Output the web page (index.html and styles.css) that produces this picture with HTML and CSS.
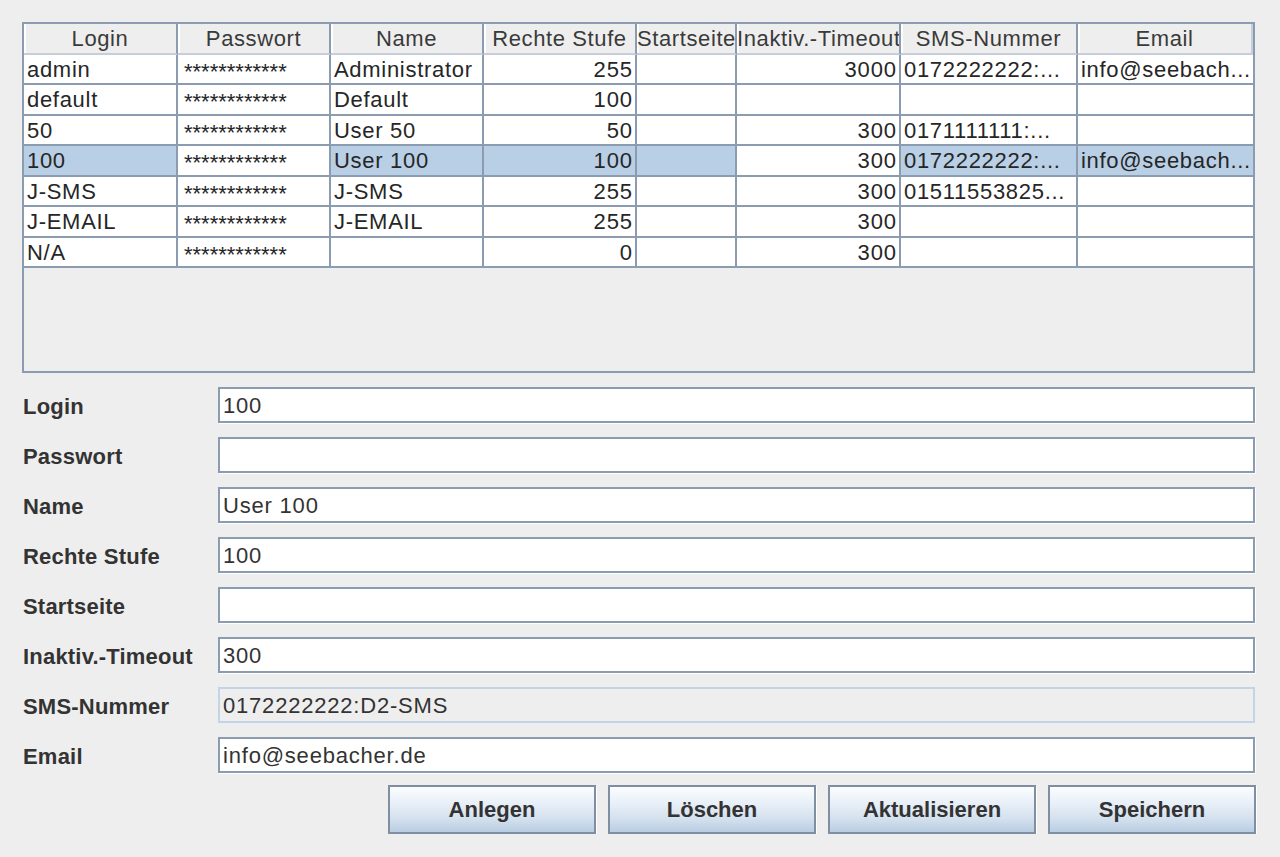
FILE: index.html
```html
<!DOCTYPE html>
<html lang="de">
<head>
<meta charset="utf-8">
<title>Benutzer</title>
<link rel="stylesheet" href="styles.css">
</head>
<body>
<div class="app">
  <div class="scrollpane">
    <div class="grid header">
      <div class="hc">Login</div>
      <div class="hc">Passwort</div>
      <div class="hc">Name</div>
      <div class="hc">Rechte Stufe</div>
      <div class="hc">Startseite</div>
      <div class="hc">Inaktiv.-Timeout</div>
      <div class="hc">SMS-Nummer</div>
      <div class="hc last">Email</div>
    </div>
    <div class="grid row">
      <div class="c">admin</div><div class="c pw">************</div><div class="c">Administrator</div><div class="c num">255</div><div class="c"></div><div class="c num">3000</div><div class="c">0172222222:...</div><div class="c last">info@seebach...</div>
    </div>
    <div class="grid row">
      <div class="c">default</div><div class="c pw">************</div><div class="c">Default</div><div class="c num">100</div><div class="c"></div><div class="c num"></div><div class="c"></div><div class="c last"></div>
    </div>
    <div class="grid row">
      <div class="c">50</div><div class="c pw">************</div><div class="c">User 50</div><div class="c num">50</div><div class="c"></div><div class="c num">300</div><div class="c">0171111111:...</div><div class="c last"></div>
    </div>
    <div class="grid row selected">
      <div class="c sel">100</div><div class="c pw">************</div><div class="c sel">User 100</div><div class="c num sel">100</div><div class="c sel"></div><div class="c num">300</div><div class="c sel">0172222222:...</div><div class="c last sel">info@seebach...</div>
    </div>
    <div class="grid row">
      <div class="c">J-SMS</div><div class="c pw">************</div><div class="c">J-SMS</div><div class="c num">255</div><div class="c"></div><div class="c num">300</div><div class="c">01511553825...</div><div class="c last"></div>
    </div>
    <div class="grid row">
      <div class="c">J-EMAIL</div><div class="c pw">************</div><div class="c">J-EMAIL</div><div class="c num">255</div><div class="c"></div><div class="c num">300</div><div class="c"></div><div class="c last"></div>
    </div>
    <div class="grid row">
      <div class="c">N/A</div><div class="c pw">************</div><div class="c"></div><div class="c num">0</div><div class="c"></div><div class="c num">300</div><div class="c"></div><div class="c last"></div>
    </div>
  </div>

  <div class="form">
    <label class="lbl">Login</label><div class="field">100</div>
    <label class="lbl">Passwort</label><div class="field"></div>
    <label class="lbl">Name</label><div class="field">User 100</div>
    <label class="lbl">Rechte Stufe</label><div class="field">100</div>
    <label class="lbl">Startseite</label><div class="field"></div>
    <label class="lbl">Inaktiv.-Timeout</label><div class="field">300</div>
    <label class="lbl">SMS-Nummer</label><div class="field readonly">0172222222:D2-SMS</div>
    <label class="lbl">Email</label><div class="field">info@seebacher.de</div>
  </div>

  <div class="buttons">
    <button class="btn">Anlegen</button>
    <button class="btn">Löschen</button>
    <button class="btn">Aktualisieren</button>
    <button class="btn">Speichern</button>
  </div>
</div>
</body>
</html>
```

FILE: styles.css
```css
html, body {
  margin: 0;
  padding: 0;
  background: #eeeeee;
}
body {
  font-family: "Liberation Sans", Arial, sans-serif;
  font-size: 22px;
  color: #222;
}
.app {
  padding: 22px 0 0 22px;
  width: 1234px;
}
.scrollpane {
  box-sizing: border-box;
  width: 1233px;
  height: 351px;
  border: 2px solid #8c9cb0;
  background: #eeeeee;
}
.grid {
  display: grid;
  grid-template-columns: 154px 153px 153px 153px 100px 164px 177px 175px;
}
.header {
  height: 31px;
  background: #eeeeee;
}
.hc {
  box-sizing: border-box;
  border-right: 2px solid #8c9cb0;
  border-bottom: 2px solid #c6cfd9;
  box-shadow: inset 2px 0 0 #ffffff;
  text-align: center;
  color: #3a3a3a;
  letter-spacing: 0.6px;
  line-height: 30px;
  white-space: nowrap;
  overflow: hidden;
}
.hc.last {
  border-right: 2px solid #c6cfd9;
}
.row {
  height: 30.43px;
  background: #ffffff;
}
.c {
  box-sizing: border-box;
  border-right: 2px solid #8c9cb0;
  border-bottom: 2px solid #8c9cb0;
  padding: 0 3px 0 3px;
  line-height: 29px;
  letter-spacing: 0.7px;
  white-space: nowrap;
  overflow: hidden;
  color: #262626;
  background: #ffffff;
}
.c.pw {
  padding-top: 4px;
  padding-left: 6px;
  line-height: 25px;
  letter-spacing: 0;
}
.c.last {
  border-right: none;
}
.c.num {
  text-align: right;
  padding-right: 2px;
  letter-spacing: 0.9px;
}
.c.sel {
  background: #b8cfe5;
}
.form {
  margin-top: 14px;
  display: grid;
  grid-template-columns: 196px 1037px;
  grid-auto-rows: 36px;
  row-gap: 14px;
  align-items: center;
}
.lbl {
  font-weight: bold;
  color: #333;
  padding-left: 1px;
  padding-top: 3px;
  letter-spacing: 0.2px;
}
.field {
  box-sizing: border-box;
  height: 36px;
  background: #ffffff;
  border: 2px solid #8c9cb0;
  box-shadow: 1px 1px 0 #ffffff;
  padding: 0 4px 0 3px;
  line-height: 33px;
  letter-spacing: 0.8px;
  color: #333;
  white-space: nowrap;
  overflow: hidden;
}
.field.readonly {
  background: #eeeeee;
  border: 2px solid #c4d4e6;
  box-shadow: none;
}
.buttons {
  margin-top: 12px;
  display: flex;
  justify-content: flex-end;
  gap: 12px;
}
.btn {
  box-sizing: border-box;
  width: 208px;
  height: 49px;
  border: 2px solid #7f8ea0;
  background: linear-gradient(to bottom, #fbfdff 0%, #e6eef7 40%, #d4e1ee 70%, #b9cde2 100%);
  font-family: "Liberation Sans", Arial, sans-serif;
  font-size: 22px;
  font-weight: bold;
  color: #333;
  padding: 0;
  box-shadow: 1px 1px 0 #ffffff;
}
```
